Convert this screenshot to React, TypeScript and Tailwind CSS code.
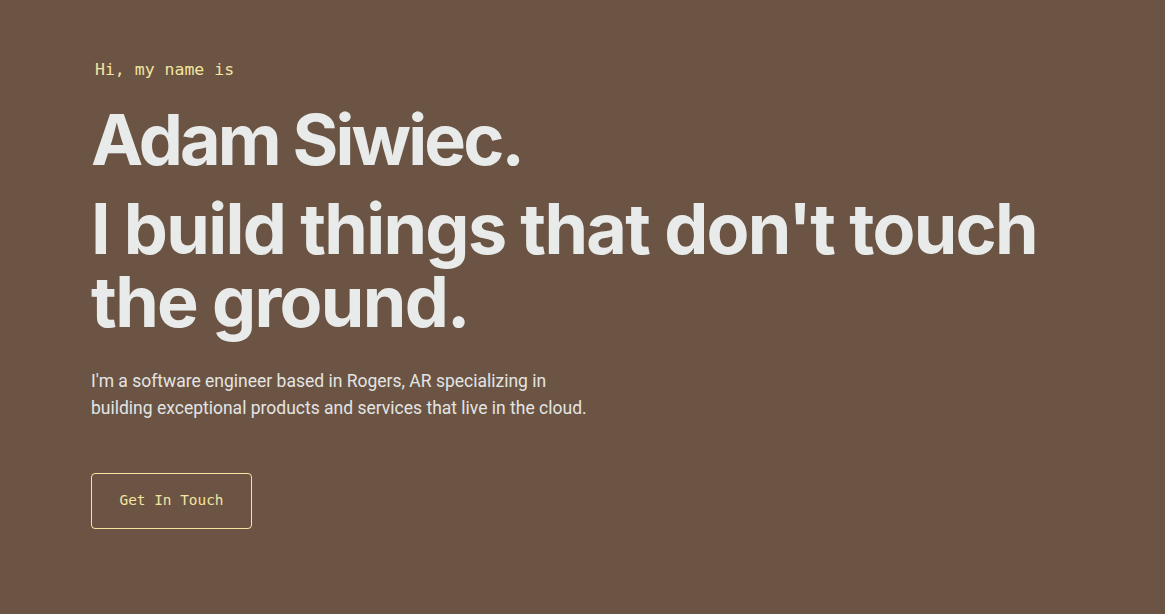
export default function App() {
  return (
    <div className="min-h-[614px] w-full bg-[#6b5443] overflow-hidden">
      <section className="flex flex-col items-start pl-[91px] pt-[60px]">
        <p className="ml-1 font-['DejaVu_Sans_Mono',monospace] text-[16.5px] leading-[20px] text-[#f3e4a0]">
          Hi, my name is
        </p>
        <h1 className="mt-[22px] font-['Inter',sans-serif] text-[70px] font-bold leading-[76px] tracking-[-0.041em] text-[#e9ebeb]">
          Adam Siwiec.
        </h1>
        <h2 className="mt-[14px] max-w-[980px] font-['Inter',sans-serif] text-[70px] font-bold leading-[73px] tracking-[-0.024em] text-[#e9ebeb]">
          I build things that don't touch the ground.
        </h2>
        <p className="mt-[30px] max-w-[505px] font-['Roboto',sans-serif] text-[17.5px] leading-[27px] text-[#e4e4e4]">
          I'm a software engineer based in Rogers, AR specializing in building exceptional products and services that live in the cloud.
        </p>
        <button className="mt-[51px] h-[56px] w-[161px] rounded-[4px] border border-[#f3e4a0] font-['DejaVu_Sans_Mono',monospace] text-[14.4px] text-[#f3e4a0]">
          Get In Touch
        </button>
      </section>
    </div>
  );
}
